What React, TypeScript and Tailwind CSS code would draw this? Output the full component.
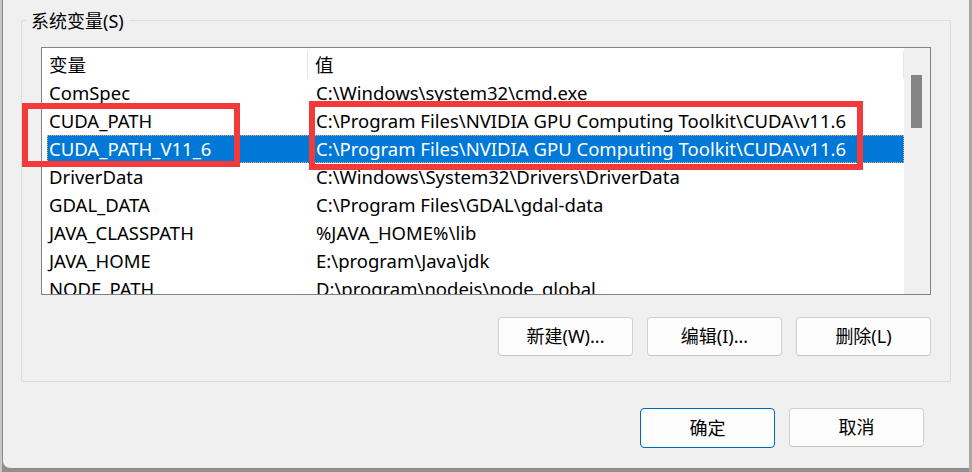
import React from "react";

type EnvRow = { name: string; value: string };

const rows: EnvRow[] = [
  { name: "ComSpec", value: "C:\\Windows\\system32\\cmd.exe" },
  { name: "CUDA_PATH", value: "C:\\Program Files\\NVIDIA GPU Computing Toolkit\\CUDA\\v11.6" },
  { name: "CUDA_PATH_V11_6", value: "C:\\Program Files\\NVIDIA GPU Computing Toolkit\\CUDA\\v11.6" },
  { name: "DriverData", value: "C:\\Windows\\System32\\Drivers\\DriverData" },
  { name: "GDAL_DATA", value: "C:\\Program Files\\GDAL\\gdal-data" },
  { name: "JAVA_CLASSPATH", value: "%JAVA_HOME%\\lib" },
  { name: "JAVA_HOME", value: "E:\\program\\Java\\jdk" },
  { name: "NODE_PATH", value: "D:\\program\\nodejs\\node_global" },
];

const selected = "CUDA_PATH_V11_6";

function WinButton({ children, primary }: { children: React.ReactNode; primary?: boolean }) {
  return (
    <button
      className={
        primary
          ? "flex h-[40px] w-[135px] items-center justify-center rounded-[4px] border border-[#0067c0] bg-[#fdfdfd] text-[18px] text-black"
          : "flex h-[39px] w-[135px] items-center justify-center rounded-[4px] border border-[#d0d0d0] border-b-[#c4c4c4] bg-[#fdfdfd] text-[18px] text-black"
      }
    >
      {children}
    </button>
  );
}

export default function App() {
  return (
    <div
      className="relative flex h-[472px] w-[972px] overflow-hidden bg-[#8f8f8c] text-black"
      style={{ fontFamily: '"Noto Sans", "Noto Sans CJK SC", sans-serif' }}
    >
      <div className="h-full w-[2px] bg-[#c6c6c6]" />
      <div className="flex h-[469px] flex-1 flex-col rounded-bl-[8px] border-b border-l border-[#8a8a8a] bg-[#f0f0f0] pl-[18px] pr-[18px]">
        <div className="mt-[20px] h-[362px] rounded-[2px] border border-[#dcdcdc] px-[19px]">
          <div className="-ml-[15px] -mt-[12px] w-fit bg-[#f0f0f0] px-[5px] text-[18px] leading-[24px]">
            系统变量(S)
          </div>
          <div className="mt-[14px] flex h-[248px] border border-[#82828e] bg-white">
            <div className="flex-1 overflow-hidden pl-[5px] text-[18.5px]">
              <div className="flex h-[31px] pt-[3px] leading-[28px]">
                <div className="w-[261px] border-r border-[#e5e5e5] pl-[2px]">变量</div>
                <div className="flex-1 pl-[7px]">值</div>
                <div className="w-px bg-[#e5e5e5]" />
              </div>
              {rows.map((row) => {
                const active = row.name === selected;
                return (
                  <div
                    key={row.name}
                    className={
                      active
                        ? "flex h-[28px] border border-dotted border-[#e8b070] bg-[#0078d7] leading-[26px] text-white"
                        : "flex h-[28px] border border-transparent leading-[26px]"
                    }
                  >
                    <div className="w-[261px] whitespace-nowrap pl-[1px]">{row.name}</div>
                    <div className="flex-1 whitespace-nowrap pl-[7px]">{row.value}</div>
                  </div>
                );
              })}
            </div>
            <div className="w-[26px] bg-[#f0f0f0] pl-[7px] pt-[27px]">
              <div className="h-[53px] w-[11px] bg-[#858585]" />
            </div>
          </div>
          <div className="mt-[22px] flex justify-end gap-[14px]">
            <WinButton>新建(W)...</WinButton>
            <WinButton>编辑(I)...</WinButton>
            <WinButton>删除(L)</WinButton>
          </div>
        </div>
        <div className="mt-[26px] flex justify-end gap-[14px] pr-[27px]">
          <WinButton primary>确定</WinButton>
          <WinButton>取消</WinButton>
        </div>
      </div>
      <div className="h-full w-[3px] bg-[#aaa89e]" />

      <div className="pointer-events-none absolute left-[22px] top-[103px] h-[64px] w-[218px] border-[6px] border-[#f23a3a]" />
      <div className="pointer-events-none absolute left-[309px] top-[101px] h-[69px] w-[554px] border-[6px] border-[#f23a3a]" />
    </div>
  );
}
